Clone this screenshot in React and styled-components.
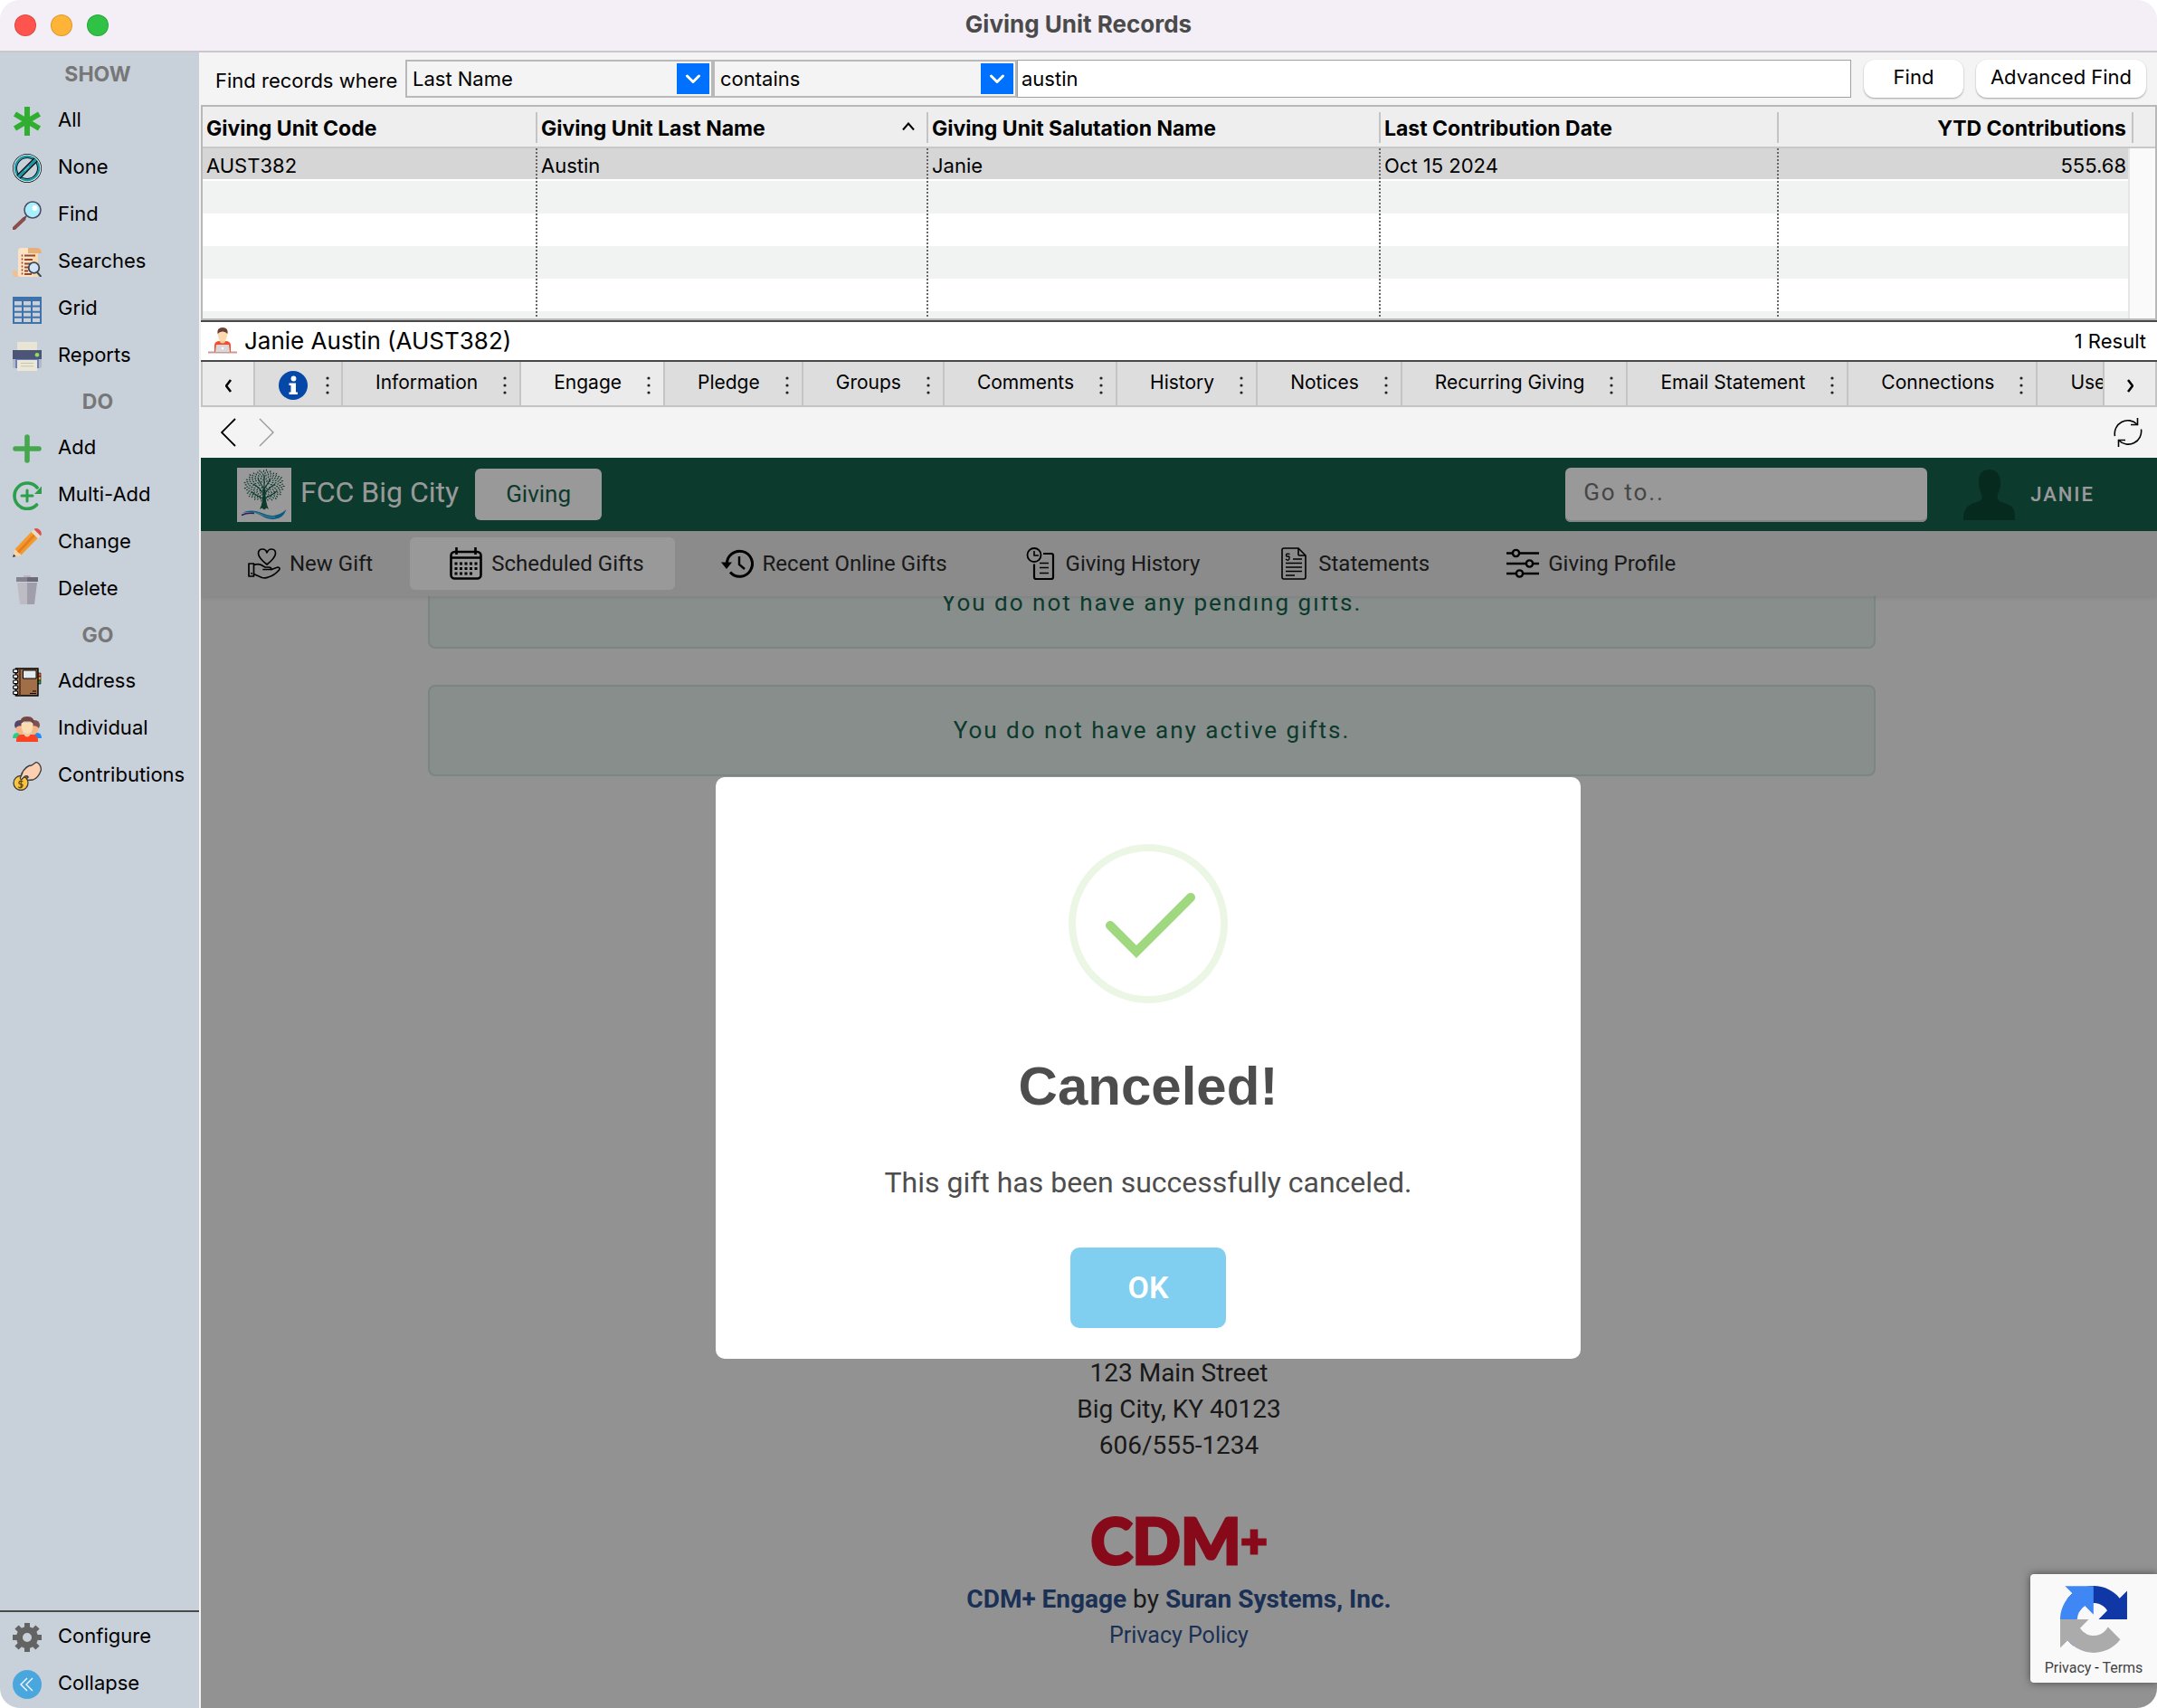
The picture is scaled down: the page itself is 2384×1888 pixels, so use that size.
import { useState } from 'react';
import styled, { createGlobalStyle, css } from 'styled-components';

const GlobalStyle = createGlobalStyle`
  * {
    box-sizing: border-box;
  }

  body {
    margin: 0;
    background: #fff;
    font-family: Inter, "Liberation Sans", sans-serif;
    font-size: 22px;
    color: #000;
  }

  button, input, select {
    font: inherit;
    color: inherit;
    margin: 0;
  }

  button {
    cursor: pointer;
  }

  svg {
    display: block;
    flex: none;
  }
`;

/* ---------- window frame ---------- */

const Window = styled.div`
  display: flex;
  flex-direction: column;
  min-height: 100vh;
  border-radius: 22px;
  overflow: hidden;
  background: #f4f4f4;
`;

const TitleBar = styled.header`
  display: grid;
  grid-template-columns: 1fr auto 1fr;
  align-items: center;
  height: 58px;
  padding: 0 16px;
  background: #f4eff7;
  border-bottom: 2px solid #c9c6cc;
`;

const Lights = styled.div`
  display: flex;
  gap: 16px;
`;

const Light = styled.button`
  width: 24px;
  height: 24px;
  padding: 0;
  border: 1px solid rgba(0, 0, 0, 0.15);
  border-radius: 50%;
  background: ${({ $color }) => $color};
`;

const WindowTitle = styled.h1`
  margin: 0;
  padding-bottom: 2px;
  font-size: 26px;
  line-height: 32px;
  font-weight: 700;
  color: #4a4a4a;
`;

const Body = styled.div`
  display: flex;
  flex: 1;
`;

const Main = styled.main`
  display: flex;
  flex-direction: column;
  flex: 1;
  min-width: 0;
`;

/* ---------- sidebar ---------- */

const Sidebar = styled.nav`
  display: flex;
  flex-direction: column;
  width: 220px;
  margin-right: 2px;
  flex: none;
  background: #c8d0da;
`;

const SidebarHeading = styled.h2`
  margin: 0;
  height: 50px;
  padding-right: 4px;
  line-height: 48px;
  text-align: center;
  font-size: 23px;
  font-weight: 700;
  color: #777;
`;

const SidebarItem = styled.button`
  display: flex;
  align-items: center;
  gap: 18px;
  width: 100%;
  height: 52px;
  padding: 0 0 0 14px;
  border: 0;
  background: none;
  text-align: left;

  span {
    padding-bottom: 4px;
  }
`;

const SidebarFooter = styled.div`
  margin-top: auto;
  padding-top: 2px;
  border-top: 2px solid #4a4a4a;
`;

/* ---------- record search ---------- */

const SearchForm = styled.form`
  display: flex;
  align-items: center;
  height: 58px;
  padding: 0 12px 0 16px;
  background: #f4f4f4;
`;

const SearchLabel = styled.label`
  width: 210px;
  flex: none;
  padding-top: 4px;
  white-space: nowrap;
`;

const SelectBox = styled.div`
  display: grid;
  align-items: center;
  width: ${({ $width }) => $width}px;
  height: 42px;
  flex: none;
  border: 2px solid #b8b8b8;
  background: #f4f4f4;

  select {
    grid-area: 1 / 1;
    width: 100%;
    height: 100%;
    padding: 0 44px 0 6px;
    border: 0;
    border-radius: 0;
    background: none;
    appearance: none;
  }

  svg {
    grid-area: 1 / 1;
    justify-self: end;
    margin-right: 2px;
    pointer-events: none;
  }
`;

const SearchInput = styled.input`
  flex: 1;
  min-width: 0;
  height: 42px;
  padding: 0 4px;
  border: 1px solid #a0a0a0;
  background: #fff;
`;

const PushButton = styled.button`
  height: 42px;
  margin-left: 14px;
  width: ${({ $wide }) => ($wide ? 188 : 110)}px;
  padding: 0 0 4px;
  border: 0;
  border-radius: 12px;
  background: #fff;
  box-shadow: 0 1px 2px rgba(0, 0, 0, 0.35);
  white-space: nowrap;
`;

/* ---------- result table ---------- */

const TableFrame = styled.div`
  border: 2px solid #b8b8b8;
  background: #fff;
`;

const Table = styled.table`
  width: 100%;
  table-layout: fixed;
  border-collapse: separate;
  border-spacing: 0;
`;

const HeadCell = styled.th`
  height: 46px;
  padding: 4px ${({ $right }) => ($right ? 2 : 4)}px 0 4px;
  border-bottom: 2px solid #c8c8c8;
  background: linear-gradient(#c4c4c4, #c4c4c4) right 6px / 2px 34px no-repeat #eee;
  text-align: ${({ $right }) => ($right ? 'right' : 'left')};
  font-size: 23px;
  line-height: 28px;
  font-weight: 700;
  white-space: nowrap;

  ${({ $last }) => $last && css`
    background: #eee;
  `}

  ${({ $track }) => $track && css`
    background: linear-gradient(#c4c4c4, #c4c4c4) 4px 6px / 2px 34px no-repeat #eee;
  `}

  div {
    display: flex;
    align-items: center;
    justify-content: space-between;
    padding-right: 11px;
  }

  svg {
    margin-bottom: 4px;
  }
`;

const Row = styled.tr`
  height: ${({ $height }) => $height || 36}px;
  background: ${({ $tone }) => $tone};
`;

const Cell = styled.td`
  padding: 0 ${({ $right }) => ($right ? 2 : 4)}px 0 4px;
  text-align: ${({ $right }) => ($right ? 'right' : 'left')};
  background: ${({ $right }) => ($right
    ? 'none'
    : 'repeating-linear-gradient(#666 0 2px, transparent 2px 4px) right top / 2px 100% no-repeat')};
  ${({ $line }) => $line && css`
    padding-top: 3px;
    border-bottom: 2px solid #fff;
  `}
`;

const ScrollTrack = styled.td`
  padding: 0;
  border-left: 2px solid #e6e6e6;
  background: #fafafa;
`;

/* ---------- selected record ---------- */

const RecordBar = styled.section`
  display: flex;
  align-items: center;
  gap: 8px;
  height: 46px;
  padding: 0 12px 0 8px;
  border-top: 2px solid #484848;
  border-bottom: 2px solid #484848;
  background: #fff;

  h2 {
    margin: 0;
    flex: 1;
    font-size: 26px;
    line-height: 32px;
    font-weight: 400;
  }
`;

const TabBar = styled.div`
  display: flex;
  height: 50px;
  border: 2px solid #c4c4c4;
  border-top: 0;
  background: #ddd;
`;

const TabScroller = styled.button`
  width: 56px;
  flex: none;
  padding: 4px 0 0;
  border: 0;
  background: #ebebeb;
  display: flex;
  align-items: center;
  justify-content: center;
`;

const TabList = styled.div`
  display: flex;
  flex: 1;
  min-width: 0;
  overflow: hidden;
  border-left: 2px solid #c4c4c4;
  border-right: 2px solid #c4c4c4;
`;

const Tab = styled.button`
  display: flex;
  align-items: center;
  flex: none;
  gap: 28px;
  padding: 3px 14px 0 36px;
  border: 0;
  border-right: 2px solid #c4c4c4;
  background: ${({ $active }) => ($active ? '#ebebeb' : '#ddd')};
  font-size: 21px;

  ${({ $icon }) => $icon && css`
    gap: 20px;
    padding: 3px 13px 0 26px;
  `}

  span {
    padding-bottom: 6px;
  }
`;

const BrowserBar = styled.div`
  display: flex;
  align-items: center;
  gap: 25px;
  height: 56px;
  padding: 0 16px 0 22px;
  background: #f4f4f4;
`;

const BareButton = styled.button`
  padding: 0;
  border: 0;
  background: none;

  &:last-child {
    margin-left: auto;
  }
`;

/* ---------- embedded web page ---------- */

const WebView = styled.section`
  position: relative;
  display: flex;
  flex-direction: column;
  flex: 1;
  overflow: hidden;
  background: #f3f3f3;
  font-family: Roboto, "Liberation Sans", sans-serif;
`;

const SiteHeader = styled.header`
  display: flex;
  align-items: center;
  height: 81px;
  flex: none;
  padding: 0 69px 0 40px;
  background: #14614b;
  color: #fff;
`;

const SiteName = styled.div`
  margin: 0 18px 0 10px;
  padding-bottom: 6px;
  font-size: 32px;
  line-height: 38px;
`;

const GivingButton = styled.button`
  height: 57px;
  padding: 0 34px 2px;
  border: 0;
  border-radius: 6px;
  background: #fff;
  color: #14614b;
  font-size: 26px;
`;

const GoTo = styled.input`
  width: 400px;
  height: 60px;
  margin: 0 40px 0 auto;
  padding: 0 20px 6px;
  border: 0;
  border-radius: 6px;
  background: #fff;
  box-shadow: inset 0 -2px 0 #ddd;
  font-size: 26px;
  letter-spacing: 2px;

  &::placeholder {
    color: #757575;
    opacity: 1;
  }
`;

const Account = styled.a`
  display: flex;
  align-items: center;
  gap: 17px;
  color: #fff;
  font-size: 22px;
  font-weight: 500;
  letter-spacing: 2px;
  text-decoration: none;
`;

const SubNav = styled.nav`
  position: relative;
  z-index: 1;
  display: flex;
  align-items: center;
  gap: 7px;
  height: 72px;
  flex: none;
  padding-left: 8px;
  background: #e8e8e8;
  box-shadow: 0 2px 4px rgba(0, 0, 0, 0.08);
`;

const SubNavLink = styled.a`
  display: flex;
  align-items: center;
  gap: 10px;
  height: 58px;
  padding: 0 34px 0 44px;
  border-radius: 6px;
  background: ${({ $active }) => ($active ? '#fff' : 'none')};
  color: #2b2b2b;
  font-size: 24px;
  text-decoration: none;
  white-space: nowrap;

  svg {
    color: #000;
  }
`;

/* scrolled so that the first notice is partly under the sub navigation */
const Notices = styled.div`
  display: flex;
  flex-direction: column;
  gap: 40px;
  margin-top: -43px;
  padding: 0 311px 0 251px;
`;

const Notice = styled.p`
  margin: 0;
  height: 101px;
  border: 2px solid #cbdfd9;
  border-radius: 8px;
  background: #e3ede8;
  color: #14614b;
  font-size: 26px;
  line-height: 97px;
  letter-spacing: 2px;
  text-align: center;
`;

const SiteFooter = styled.footer`
  display: flex;
  flex-direction: column;
  align-items: center;
  margin-top: auto;
  padding-bottom: 60px;
  font-size: 28px;
  line-height: 40px;
  color: #2b2b2b;

  address {
    font-style: normal;
    text-align: center;
  }

  a {
    color: #2d508e;
    text-decoration: none;
  }
`;

const Brand = styled.div`
  display: flex;
  align-items: center;
  height: 130px;
  padding-top: 38px;
  color: #e2112d;
  font-family: Lato, sans-serif;
  font-size: 70px;
  line-height: 80px;
  font-weight: 900;
  -webkit-text-stroke: 3px #e2112d;

  span {
    font-size: 50px;
  }
`;

const Policy = styled.a`
  font-size: 25px;
`;

/* ---------- dialog ---------- */

const Overlay = styled.div`
  position: absolute;
  inset: 0;
  z-index: 2;
  display: flex;
  align-items: center;
  justify-content: center;
  padding: 0 68px 34px 0;
  background: rgba(0, 0, 0, 0.4);
`;

const Dialog = styled.div`
  display: flex;
  flex-direction: column;
  align-items: center;
  width: 956px;
  padding: 74px 34px 34px;
  border-radius: 10px;
  background: #fff;
  color: #4d4d4d;

  h2 {
    margin: 52px 0 46px;
    font-family: "Liberation Sans", sans-serif;
    font-size: 60px;
    line-height: 80px;
    font-weight: 700;
  }

  p {
    margin: 0 0 52px;
    font-size: 32px;
    line-height: 40px;
  }
`;

const OkButton = styled.button`
  width: 172px;
  height: 89px;
  border: 0;
  border-radius: 10px;
  background: #80cff0;
  color: #fff;
  font-size: 34px;
  font-weight: 600;
`;

const Recaptcha = styled.aside`
  position: absolute;
  right: 0;
  bottom: 28px;
  z-index: 3;
  display: flex;
  flex-direction: column;
  align-items: center;
  gap: 7px;
  width: 140px;
  height: 120px;
  padding-top: 13px;
  border-radius: 4px 0 0 4px;
  background: #f9f9f9;
  box-shadow: 0 0 10px rgba(0, 0, 0, 0.5);
  font-size: 16px;
  line-height: 20px;

  a {
    color: #444;
    text-decoration: none;
  }
`;

/* ---------- icons ---------- */

const Icon = ({ size = 32, children, ...rest }) => (
  <svg width={size} height={size} viewBox={`0 0 ${size} ${size}`} fill="none" aria-hidden="true" {...rest}>
    {children}
  </svg>
);

const AllIcon = () => (
  <Icon stroke="#2fae2f" strokeWidth="6">
    <path d="M16 0v32M2.500 8l27 16M29.500 8l-27 16" />
  </Icon>
);

const NoneIcon = () => (
  <Icon>
    <circle cx="16" cy="16" r="13.500" stroke="#000" strokeWidth="5" />
    <circle cx="16" cy="16" r="14" stroke="#d5eef0" strokeWidth="2.600" />
    <circle cx="16" cy="16" r="13" stroke="#1d97a5" strokeWidth="2.400" />
    <path d="M6.500 25.500l19-19" stroke="#000" strokeWidth="6" />
    <path d="M6.500 25.500l19-19" stroke="#1d97a5" strokeWidth="3.400" />
    <path d="M13 19l5-5" stroke="#7fd0d8" strokeWidth="1" />
  </Icon>
);

const FindIcon = () => (
  <Icon>
    <path d="M1.500 30.500L12.500 20" stroke="#8a4f4b" strokeWidth="4" strokeLinecap="round" />
    <path d="M12 20l3-3" stroke="#5c4a5c" strokeWidth="2" />
    <circle cx="22" cy="10" r="9" fill="#a8f0fd" stroke="#4d4a66" strokeWidth="1.600" />
    <circle cx="24.500" cy="8" r="3" fill="#fff" />
  </Icon>
);

const SearchesIcon = () => (
  <Icon>
    <path d="M6 3q0-3 4-3h18q4 1 4 6h-4v26H4q2-1 2-4z" fill="#fde3c4" />
    <path d="M17 0h11q4 1 4 6H17z" fill="#e6b07a" />
    <path d="M28 6v26h-6V6z" fill="#fbd9ab" />
    <path d="M0 25h5v3q0 4 4 4H3q-3-1-3-4z" fill="#f1bf90" />
    <path d="M13 8.500h12M13 13h9M13 17.500h9M13 21.500h5M13 25.500h4M13 29h8" stroke="#96472f" strokeWidth="2" />
    <path d="M10.500 7.500v22" stroke="#96472f" strokeWidth="1.600" strokeDasharray="2 2" />
    <path d="M27 27l4.500 5" stroke="#3c4755" strokeWidth="2" />
    <circle cx="23.500" cy="22" r="5.800" fill="#d3e2f7" stroke="#3c4755" strokeWidth="1.800" />
  </Icon>
);

const GridIcon = () => (
  <Icon stroke="#3f72ab">
    <path d="M0 4.500h32" strokeWidth="5" />
    <path d="M1 4v27h30V4M11 6v25M21 6v25M1 12.500h30M1 18.700h30M1 24.800h30" strokeWidth="2" />
  </Icon>
);

const PrinterIcon = () => (
  <Icon>
    <path d="M5 0h22v10H5z" fill="#e9e5d5" />
    <path d="M0 18h32v9q0 2-2 2H2q-2 0-2-2z" fill="#b3bac2" />
    <path d="M3 19h26v10H3z" fill="#6b7fc4" />
    <path d="M0 9h32v10H0z" fill="#4c5576" />
    <path d="M5 20h22v12H5z" fill="#ece8d8" />
    <path d="M9 23.500h14M9 26.800h14" stroke="#c8c4a8" />
    <circle cx="27" cy="14.300" r="2.300" fill="#8fe25a" />
  </Icon>
);

const AddIcon = () => (
  <Icon stroke="#45a84d" strokeWidth="5.600" strokeLinecap="round">
    <path d="M16 3v26M3 16h26" />
  </Icon>
);

const MultiAddIcon = () => (
  <Icon stroke="#2c9f4b" strokeWidth="3.600" strokeLinecap="round">
    <path d="M26.500 26A14.200 14.200 0 1 1 27 7" />
    <path d="M32 5.500V14h-8z" fill="#2c9f4b" stroke="none" />
    <path d="M16 10v12M10 16h12" strokeWidth="3" />
  </Icon>
);

const PencilIcon = () => (
  <Icon>
    <path d="M0 32l2.500-9 7 6.500z" fill="#fbd3a5" />
    <path d="M0 32l1-3.500L3.500 31z" fill="#333" />
    <path d="M2.500 23L21 3.500l7 7L9.500 29.500z" fill="#f39a2e" />
    <path d="M5 25.500L23.500 6l2 2L7 27.500z" fill="#e57e1f" />
    <path d="M20.500 4l3-3 7.500 7.500-3 3z" fill="#e8ddc9" />
    <path d="M23.500 1q2.500-2 6 .5T31 8.500z" fill="#d9514e" />
  </Icon>
);

const TrashIcon = () => (
  <Icon>
    <path d="M12 0h8v3h-8z" fill="#b9b7be" />
    <path d="M5 8h11v24H8z" fill="#bdbbc4" />
    <path d="M16 8h11l-3 24h-8z" fill="#a09ea9" />
    <path d="M4 2h12v5H4z" fill="#85838f" />
    <path d="M16 2h12v5H16z" fill="#6c6a78" />
  </Icon>
);

const AddressIcon = () => (
  <Icon>
    <path d="M27 6h4v4h-4z" fill="#ee5a2b" stroke="#000" strokeWidth="0.600" />
    <path d="M27 10h4v4h-4z" fill="#f6b531" stroke="#000" strokeWidth="0.600" />
    <path d="M27 14h4v4h-4z" fill="#2f9e44" stroke="#000" strokeWidth="0.600" />
    <path d="M3.500 1H28v30H3.500z" fill="#a06f48" stroke="#000" strokeWidth="1.400" />
    <path d="M8 1v30" stroke="#4a2f1c" strokeWidth="1.600" />
    <path d="M11.500 3H26v9H11.500z" fill="#e3ebee" stroke="#000" />
    <path d="M22 26h4M19 28.500h7" stroke="#000" />
    {[2, 8, 14, 20, 26].map((y) => (
      <rect key={y} x="0.700" y={y} width="5" height="3.600" rx="1" fill="#fff" stroke="#000" strokeWidth="1.200" />
    ))}
  </Icon>
);

const PeopleIcon = () => (
  <Icon>
    <path d="M0 26q0-6 5-6h5v6z" fill="#2fcb85" />
    <path d="M32 26q0-6-5-6h-5v6z" fill="#1f8df5" />
    <path d="M3 11h8v12q-6-1-7-6z" fill="#f8b583" />
    <path d="M29 11h-8v12q6-1 7-6z" fill="#f8b583" />
    <path d="M2 12q0-6 6-6h3v7q-5-2-8 2z" fill="#54466b" />
    <path d="M30 12q0-6-6-6h-3v7q5-2 8 2z" fill="#7a5254" />
    <path d="M4 30q-.5-8 6-8h12q6.500 0 6 8z" fill="#fb4321" />
    <path d="M13 18h6v5q-3 3-6 0z" fill="#f5c79a" />
    <path d="M9.500 9q-1 11 6.500 12 7.500-1 6.500-12z" fill="#fddcb2" />
    <path d="M8.500 11Q7 2 16 2t7.500 9q-1.500-3-4-3.500h-7Q10 8 8.500 11z" fill="#74463f" />
  </Icon>
);

const ContributionsIcon = () => (
  <Icon stroke="#3a3a3a" strokeWidth="1.300" strokeLinejoin="round">
    <path d="M10 13Q15 4 21 4l5-3.500Q31 2 31.500 9q-3 9-9 11l-6 .5q-2-2 1-3.500-2-1-4 1l-3 3.500q-2.500-.5-1.500-3z" fill="#fbcfb0" />
    <circle cx="9" cy="23.500" r="8" fill="#f9c440" />
    <path d="M17 16q-3-1-5 1.500L9.500 20q-1.500-.5-1-2.500L11 12" fill="#fbcfb0" />
    <path d="M11.500 22q-4-1.500-4.500.7t2.300 2.200 1.300 2.600-4.300.3M9.200 20.500v8.500" stroke="#5a4312" strokeWidth="1.200" />
  </Icon>
);

const GearIcon = () => (
  <Icon>
    <circle cx="16" cy="16" r="8.500" stroke="#636363" strokeWidth="7" />
    <g stroke="#636363" strokeWidth="6">
      <path d="M16 0v5M16 27v5M0 16h5M27 16h5M4.500 4.500L8 8M24 24l3.500 3.500M27.500 4.500L24 8M8 24l-3.500 3.500" />
    </g>
  </Icon>
);

const CollapseIcon = () => (
  <Icon stroke="#fff" strokeWidth="1.300">
    <circle cx="16" cy="16" r="16" fill="#4aa7de" stroke="none" />
    <path d="M16 9l-7 7 7 7M22 9l-7 7 7 7" />
  </Icon>
);

const PersonIcon = () => (
  <Icon>
    <path d="M0 28.500h32" stroke="#c99a95" strokeWidth="2" />
    <path d="M7 28v-7q0-5 6-5h6q6 0 6 5v7z" fill="#fb4a2b" />
    <path d="M13 13h6v4q-3 3-6 0z" fill="#f5c79a" />
    <path d="M10.500 6q0 10 5.500 10t5.500-10z" fill="#fdd9ae" />
    <path d="M10.500 8Q9.500 1 16 1t5.500 7q-2-2.500-5.500-2.500T10.500 8z" fill="#6b3f35" />
    <path d="M9 20h14l1 8H8z" fill="#d9d9dc" />
    <circle cx="16" cy="24" r="1.300" fill="#fff" />
  </Icon>
);

const InfoIcon = () => (
  <Icon>
    <circle cx="16" cy="16" r="16" fill="#0648a8" />
    <circle cx="16.500" cy="8.500" r="2.900" fill="#fff" />
    <path d="M11.500 13.500h7.500v10h2V26h-9.500v-2.500h2V16h-2z" fill="#fff" />
  </Icon>
);

const DotsIcon = () => (
  <svg width="4" height="20" viewBox="0 0 4 20" fill="#222" aria-hidden="true">
    <circle cx="2" cy="2" r="1.600" />
    <circle cx="2" cy="10" r="1.600" />
    <circle cx="2" cy="18" r="1.600" />
  </svg>
);

const Chevron = ({ right, width = 7, height = 15, color = '#000', stroke = 2.6 }) => (
  <svg width={width} height={height} viewBox={`0 0 ${width} ${height}`} fill="none" stroke={color} strokeWidth={stroke} aria-hidden="true">
    <path d={right
      ? `M1 1L${width - 1} ${height / 2}L1 ${height - 1}`
      : `M${width - 1} 1L1 ${height / 2}L${width - 1} ${height - 1}`}
    />
  </svg>
);

const SelectArrow = () => (
  <svg width="36" height="34" viewBox="0 0 36 34" fill="none" aria-hidden="true">
    <path d="M0 0h36v34H0z" fill="#0071fe" />
    <path d="M11.500 14l6.500 6.500 6.500-6.500" stroke="#fff" strokeWidth="3" strokeLinecap="round" strokeLinejoin="round" />
  </svg>
);

const SortArrow = () => (
  <svg width="14" height="10" viewBox="0 0 14 10" fill="none" stroke="#000" strokeWidth="2" aria-hidden="true">
    <path d="M1 8.500L7 1.500l6 7" />
  </svg>
);

const RefreshIcon = () => (
  <Icon stroke="#000" strokeWidth="1.600">
    <path d="M1.500 20A14.500 14.500 0 0 1 26 7M30.500 12.500A14.500 14.500 0 0 1 6 25" />
    <path d="M26.500 0v7.500H19M5.500 32v-7.500H13" />
  </Icon>
);

const GiftIcon = () => (
  <Icon size={36} stroke="currentColor" strokeWidth="1.700" strokeLinejoin="round" strokeLinecap="round">
    <path d="M21 19q-9-7-9.500-12 0-5 4.700-5Q20 2 21 6q1.500-4 5-4 4.700 0 4.500 5Q30 12 21 19z" />
    <path d="M1 18h5.500v14H1zM6.500 19.500q6-2 10 1l2.500 1.500h4q3 0 3 2.500h-9" />
    <path d="M26 24.500l7-2.500q3 .5 1.500 3-5 6-12 8-3 1.500-7 .5l-9-4" />
    <path d="M4 28.500v.5" />
  </Icon>
);

const CalendarIcon = () => (
  <Icon size={36} stroke="currentColor" strokeWidth="2.600">
    <rect x="1.500" y="5" width="33" height="29.500" rx="4" />
    <path d="M7.500 0v8M28.500 0v8M2 11.500h32" strokeLinecap="butt" />
    <path d="M5.500 18h26M5.500 23.500h26M5.500 29h20" strokeWidth="3" strokeDasharray="3 2.500" />
  </Icon>
);

const RecentIcon = () => (
  <Icon size={36} stroke="currentColor" strokeWidth="3">
    <path d="M6.500 19A14 14 0 1 1 10 27.500" />
    <path d="M0 16.500h12L6 24z" fill="currentColor" stroke="none" />
    <path d="M20 10v9l6 5" strokeWidth="2.400" />
  </Icon>
);

const HistoryIcon = () => (
  <Icon size={36} stroke="currentColor" strokeWidth="2.200">
    <circle cx="11" cy="8.500" r="7.500" strokeWidth="1.800" />
    <path d="M11 4v5h5" strokeWidth="1.600" />
    <path d="M21 7h9q2 0 2 2v24q0 2-2 2H13q-2 0-2-2V18.500" />
    <path d="M17 17.500h10M17 22.500h10M17 28.500h10" strokeWidth="1.600" />
  </Icon>
);

const StatementIcon = () => (
  <Icon size={36} stroke="currentColor" strokeWidth="1.600">
    <path d="M24 1H8Q6 1 6 3v30q0 2 2 2h22q2 0 2-2V9zM24 1v7q0 1 1 1h7" />
    <path d="M14.500 7.500q-4-1-4 1t2 1.500 1.500 2.500-4 .7" strokeWidth="1.400" />
    <path d="M18 13h10M10 17.500h18M10 22h18M10 26.500h18M10 31h10" strokeWidth="1.500" />
  </Icon>
);

const ProfileIcon = () => (
  <Icon size={36} stroke="currentColor" strokeWidth="2.400">
    <path d="M0 6.500h7M14 6.500h22M0 18h22M29 18h7M0 29h11M18 29h18" />
    <circle cx="10.500" cy="6.500" r="3.600" />
    <circle cx="25.500" cy="18" r="3.600" />
    <circle cx="14.500" cy="29" r="3.600" />
  </Icon>
);

const AvatarIcon = () => (
  <svg width="57" height="56" viewBox="0 0 57 56" fill="#0d4635" aria-hidden="true">
    <path d="M29 0Q40 0 41 14q0 8-3 13-2 7 4 9 12 3 14 9 1 4 1 11H0q0-10 3-13 2-4 12-7 8-2 5-9-3-5-3-13Q17 0 29 0z" />
  </svg>
);

// crown leaves are spread on a spiral that fills the upper circle
const leaves = Array.from({ length: 150 }, (_, i) => {
  const angle = i * 2.4;
  const radius = 2 + Math.sqrt(i / 150) * 20;
  return { x: 30 + Math.cos(angle) * radius, y: 20 + Math.sin(angle) * radius * 0.8, angle: (angle * 180) / Math.PI };
});

const TreeLogo = () => (
  <svg width="60" height="60" viewBox="0 0 60 60" fill="none" aria-hidden="true">
    <path d="M0 0h60v60H0z" fill="#fff" />
    <path d="M28.500 24q.5 14-3.500 22l2.500-1.500 2.500 2 2.500-2L35 46q-4-8-3.500-22z" fill="#14614b" />
    <path d="M30 35q-8-4-14-8M30 34q8-3 14-8M30 30q-5-8-12-12M30 30q5-8 12-12M30 30V8M30 24l-7-12M30 24l7-12" stroke="#14614b" strokeWidth="1.200" />
    {leaves.map((leaf) => (
      <ellipse
        key={leaf.angle}
        cx={leaf.x}
        cy={leaf.y}
        rx="1.200"
        ry="0.600"
        fill="#14614b"
        transform={`rotate(${leaf.angle} ${leaf.x} ${leaf.y})`}
      />
    ))}
    <path d="M6 49.500Q16 45.500 26 49.500T40 53q9-1.500 14.500-7Q51 57 40 57q-7 0-14-4.500T6 49.500z" fill="#1599d8" />
    <path d="M18 49q6 1 12 4t12 1.500" stroke="#9fdcf5" strokeWidth="0.800" />
    <path d="M5 52.500q6-3 14-2" stroke="#4a3aa0" strokeWidth="1.600" />
  </svg>
);

const SuccessIcon = () => (
  <svg width="176" height="176" viewBox="0 0 176 176" fill="none" aria-hidden="true">
    <circle cx="88" cy="88" r="84" stroke="#ebf7e4" strokeWidth="8" />
    <path d="M46 90l29 29 60-60" stroke="#a0d880" strokeWidth="10" strokeLinecap="round" />
  </svg>
);

const RecaptchaLogo = () => (
  <svg width="74" height="74" viewBox="0 0 64 64" aria-hidden="true">
    <path fill="#1037a6" d="M64 31.955l-.033-1.370V4.687l-7.160 7.160C50.948 4.674 42.033.093 32.050.093c-10.400 0-19.622 4.960-25.458 12.640l11.736 11.860a15.550 15.550 0 0 1 4.754-5.334c2.050-1.600 4.952-2.906 8.968-2.906.485 0 .860.057 1.135.163 4.976.393 9.288 3.140 11.828 7.124l-8.307 8.307L64 31.953" />
    <path fill="#3f87f5" d="M31.862.094l-1.370.033H4.594l7.160 7.160C4.580 13.147 0 22.060 0 32.046c0 10.400 4.960 19.622 12.640 25.458L24.500 45.768a15.550 15.550 0 0 1-5.334-4.754c-1.600-2.050-2.906-4.952-2.906-8.968 0-.485.057-.860.163-1.135.393-4.976 3.140-9.288 7.124-11.828l8.307 8.307L31.860.095" />
    <path fill="#ababab" d="M.001 32.045l.033 1.370v25.898l7.160-7.160c5.860 7.173 14.774 11.754 24.760 11.754 10.400 0 19.622-4.960 25.458-12.640l-11.736-11.860a15.550 15.550 0 0 1-4.754 5.334c-2.050 1.600-4.952 2.906-8.968 2.906-.485 0-.860-.057-1.135-.163-4.976-.393-9.288-3.140-11.828-7.124l8.307-8.307L0 32.047" />
  </svg>
);

/* ---------- data ---------- */

const sidebarGroups = [
  {
    title: 'SHOW',
    items: [
      ['All', AllIcon],
      ['None', NoneIcon],
      ['Find', FindIcon],
      ['Searches', SearchesIcon],
      ['Grid', GridIcon],
      ['Reports', PrinterIcon],
    ],
  },
  {
    title: 'DO',
    items: [
      ['Add', AddIcon],
      ['Multi-Add', MultiAddIcon],
      ['Change', PencilIcon],
      ['Delete', TrashIcon],
    ],
  },
  {
    title: 'GO',
    items: [
      ['Address', AddressIcon],
      ['Individual', PeopleIcon],
      ['Contributions', ContributionsIcon],
    ],
  },
];

const tabs = [
  'Information',
  'Engage',
  'Pledge',
  'Groups',
  'Comments',
  'History',
  'Notices',
  'Recurring Giving',
  'Email Statement',
  'Connections',
  'Use',
];

const subNavLinks = [
  ['New Gift', GiftIcon],
  ['Scheduled Gifts', CalendarIcon],
  ['Recent Online Gifts', RecentIcon],
  ['Giving History', HistoryIcon],
  ['Statements', StatementIcon],
  ['Giving Profile', ProfileIcon],
];

const emptyRows = [
  { tone: '#f1f3f3' },
  { tone: '#fff' },
  { tone: '#f1f3f3' },
  { tone: '#fff' },
  { tone: '#f1f3f3', height: 8 },
];

/* ---------- parts ---------- */

const RecordSearch = () => {
  const [term, setTerm] = useState('austin');

  return (
    <SearchForm onSubmit={(e) => e.preventDefault()}>
      <SearchLabel htmlFor="field">Find records where</SearchLabel>
      <SelectBox $width={340}>
        <select id="field" defaultValue="Last Name">
          <option>Last Name</option>
        </select>
        <SelectArrow />
      </SelectBox>
      <SelectBox $width={336}>
        <select aria-label="Comparison" defaultValue="contains">
          <option>contains</option>
        </select>
        <SelectArrow />
      </SelectBox>
      <SearchInput aria-label="Search value" value={term} onChange={(e) => setTerm(e.target.value)} />
      <PushButton type="submit">Find</PushButton>
      <PushButton type="button" $wide>Advanced Find</PushButton>
    </SearchForm>
  );
};

const Results = () => (
  <TableFrame>
    <Table>
      <colgroup>
        <col style={{ width: 370 }} />
        <col style={{ width: 432 }} />
        <col style={{ width: 500 }} />
        <col style={{ width: 440 }} />
        <col />
        <col style={{ width: 30 }} />
      </colgroup>
      <thead>
        <tr>
          <HeadCell>Giving Unit Code</HeadCell>
          <HeadCell>
            <div>
              Giving Unit Last Name
              <SortArrow />
            </div>
          </HeadCell>
          <HeadCell>Giving Unit Salutation Name</HeadCell>
          <HeadCell>Last Contribution Date</HeadCell>
          <HeadCell $right $last>YTD Contributions</HeadCell>
          <HeadCell $track />
        </tr>
      </thead>
      <tbody>
        <Row $tone="#d6d6d6">
          <Cell $line>AUST382</Cell>
          <Cell $line>Austin</Cell>
          <Cell $line>Janie</Cell>
          <Cell $line>Oct 15 2024</Cell>
          <Cell $line $right>555.68</Cell>
          <ScrollTrack rowSpan={6} />
        </Row>
        {emptyRows.map((row, i) => (
          <Row key={i} $tone={row.tone} $height={row.height}>
            <Cell />
            <Cell />
            <Cell />
            <Cell />
            <Cell $right />
          </Row>
        ))}
      </tbody>
    </Table>
  </TableFrame>
);

const RecordTabs = () => (
  <TabBar>
    <TabScroller aria-label="Previous tabs"><Chevron /></TabScroller>
    <TabList role="tablist">
      <Tab role="tab" aria-label="Overview" $icon>
        <InfoIcon />
        <DotsIcon />
      </Tab>
      {tabs.map((tab) => (
        <Tab key={tab} role="tab" aria-selected={tab === 'Engage'} $active={tab === 'Engage'}>
          <span>{tab}</span>
          <DotsIcon />
        </Tab>
      ))}
    </TabList>
    <TabScroller aria-label="More tabs"><Chevron right /></TabScroller>
  </TabBar>
);

const CanceledDialog = () => (
  <Overlay>
    <Dialog role="dialog" aria-labelledby="dialog-title">
      <SuccessIcon />
      <h2 id="dialog-title">Canceled!</h2>
      <p>This gift has been successfully canceled.</p>
      <OkButton>OK</OkButton>
    </Dialog>
  </Overlay>
);

const EngagePage = () => (
  <WebView>
    <SiteHeader>
      <TreeLogo />
      <SiteName>FCC Big City</SiteName>
      <GivingButton>Giving</GivingButton>
      <GoTo aria-label="Go to" placeholder="Go to.." />
      <Account href="#account">
        <AvatarIcon />
        JANIE
      </Account>
    </SiteHeader>
    <SubNav>
      {subNavLinks.map(([label, LinkIcon]) => (
        <SubNavLink key={label} href="#giving" $active={label === 'Scheduled Gifts'}>
          <LinkIcon />
          {label}
        </SubNavLink>
      ))}
    </SubNav>
    <Notices>
      <Notice>You do not have any pending gifts.</Notice>
      <Notice>You do not have any active gifts.</Notice>
    </Notices>
    <SiteFooter>
      <address>
        123 Main Street<br />
        Big City, KY 40123<br />
        606/555-1234
      </address>
      <Brand>CDM<span>+</span></Brand>
      <div>
        <a href="#engage"><b>CDM+ Engage</b></a> by <a href="#suran"><b>Suran Systems, Inc.</b></a>
      </div>
      <Policy href="#privacy">Privacy Policy</Policy>
    </SiteFooter>
    <CanceledDialog />
    <Recaptcha>
      <RecaptchaLogo />
      <div>
        <a href="#privacy">Privacy</a> - <a href="#terms">Terms</a>
      </div>
    </Recaptcha>
  </WebView>
);

const App = () => (
  <>
    <GlobalStyle />
    <Window>
      <TitleBar>
        <Lights>
          <Light aria-label="Close" $color="#ff544d" />
          <Light aria-label="Minimize" $color="#ffb438" />
          <Light aria-label="Zoom" $color="#2fc244" />
        </Lights>
        <WindowTitle>Giving Unit Records</WindowTitle>
      </TitleBar>
      <Body>
        <Sidebar>
          {sidebarGroups.map(({ title, items }) => (
            <div key={title}>
              <SidebarHeading>{title}</SidebarHeading>
              {items.map(([label, ItemIcon]) => (
                <SidebarItem key={label}>
                  <ItemIcon />
                  <span>{label}</span>
                </SidebarItem>
              ))}
            </div>
          ))}
          <SidebarFooter>
            <SidebarItem>
              <GearIcon />
              <span>Configure</span>
            </SidebarItem>
            <SidebarItem>
              <CollapseIcon />
              <span>Collapse</span>
            </SidebarItem>
          </SidebarFooter>
        </Sidebar>
        <Main>
          <RecordSearch />
          <Results />
          <RecordBar>
            <PersonIcon />
            <h2>Janie Austin (AUST382)</h2>
            <span>1 Result</span>
          </RecordBar>
          <RecordTabs />
          <BrowserBar>
            <BareButton aria-label="Back"><Chevron width={17} height={32} stroke={1.8} /></BareButton>
            <BareButton aria-label="Forward"><Chevron right width={17} height={32} stroke={1.4} color="#999" /></BareButton>
            <BareButton aria-label="Reload"><RefreshIcon /></BareButton>
          </BrowserBar>
          <EngagePage />
        </Main>
      </Body>
    </Window>
  </>
);

export default App;
